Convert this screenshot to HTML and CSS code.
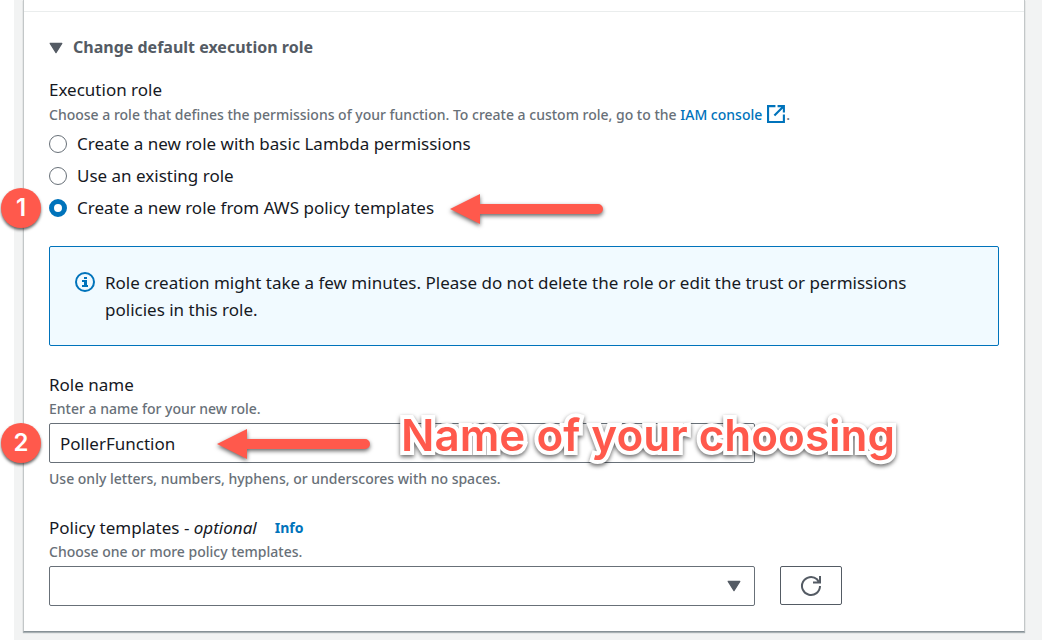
FILE: index.html
```html
<!DOCTYPE html>
<html lang="en">
<head>
<meta charset="utf-8">
<title>Create function</title>
<link rel="stylesheet" href="styles.css">
</head>
<body>
<main class="page">
  <form class="card">
    <div class="card-top"></div>
    <div class="card-body">
      <button type="button" class="expander">
        <svg class="caret" viewBox="0 0 12 10" aria-hidden="true"><path d="M1 1H11L6 9Z"/></svg>
        Change default execution role
      </button>

      <fieldset class="roles">
        <legend class="label">Execution role</legend>
        <p class="hint">Choose a role that defines the permissions of your function. To create a custom role, go to the <a href="#iam">IAM console<svg class="external" viewBox="0 0 18 18" aria-hidden="true"><path d="M8 2H1V17H16V10M10 2H16V8M16 2L7 11"/></svg></a>.</p>
        <div class="options">
          <label class="option"><input type="radio" name="role">Create a new role with basic Lambda permissions</label>
          <label class="option"><input type="radio" name="role">Use an existing role</label>
          <div class="marked">
            <label class="option"><input type="radio" name="role" checked>Create a new role from AWS policy templates</label>
            <span class="badge">1</span>
            <svg class="arrow arrow-role" viewBox="0 0 156 36" aria-hidden="true"><path d="M1 16L31 1V11H149A5 5 0 0 1 149 21H31V31Z"/></svg>
          </div>
        </div>
      </fieldset>

      <div class="alert" role="status">
        <svg class="info-icon" viewBox="0 0 20 20" aria-hidden="true"><circle cx="10" cy="10" r="9"/><path d="M9 5h3v2H9zM7 8h5v5h1v2H7v-2h2v-3H7z"/></svg>
        <p>Role creation might take a few minutes. Please do not delete the role or edit the trust or permissions policies in this role.</p>
      </div>

      <div class="field">
        <label class="label" for="role-name">Role name</label>
        <p class="hint">Enter a name for your new role.</p>
        <div class="marked">
          <input class="control" id="role-name" type="text" value="PollerFunction">
          <span class="badge">2</span>
          <svg class="arrow arrow-name" viewBox="0 0 156 36" aria-hidden="true"><path d="M1 16L31 1V11H149A5 5 0 0 1 149 21H31V31Z"/></svg>
          <span class="callout">Name of your choosing</span>
        </div>
        <p class="hint">Use only letters, numbers, hyphens, or underscores with no spaces.</p>
      </div>

      <div class="field">
        <div class="label-row"><label class="label" for="templates">Policy templates - <em>optional</em></label><a class="info" href="#info">Info</a></div>
        <p class="hint">Choose one or more policy templates.</p>
        <div class="select-row">
          <div class="select">
            <select class="control" id="templates"><option></option></select>
            <svg class="caret" viewBox="0 0 12 10" aria-hidden="true"><path d="M1 1H11L6 9Z"/></svg>
          </div>
          <button type="button" class="refresh" aria-label="Refresh">
            <svg viewBox="0 0 22 22" aria-hidden="true"><path d="M20 11A9 9 0 1 1 17 4.300L19 7M20 1V7.500H13"/></svg>
          </button>
        </div>
      </div>
    </div>
  </form>
</main>
</body>
</html>
```
FILE: styles.css
```css
* { box-sizing: border-box; }

body {
  margin: 0;
  background: #fff;
  color: #16191f;
  font: 17px/27px "Noto Sans", "Open Sans", sans-serif;
}

p { margin: 0; }
a { color: #0073bb; text-decoration: none; }

.page {
  margin-left: 14px;
  padding: 0 17px 9px 9px;
  background: #f2f3f3;
}

.card {
  background: #fff;
  border: 1px solid #c3c7c8;
  border-top: 0;
  border-bottom-color: #879196;
  box-shadow: 0 1px 1px #001c244d;
}

.card-top { height: 12px; border-bottom: 1px solid #eaeded; }
.card-body { padding: 22px 25px 25px; }

.expander {
  display: flex;
  align-items: center;
  gap: 10px;
  padding: 0;
  border: 0;
  background: none;
  color: #545b64;
  font: inherit;
  font-size: 16px;
  font-weight: 700;
}

.caret {
  width: 14px;
  height: 12px;
  fill: #545b64;
  stroke: #545b64;
  stroke-linejoin: round;
}

.roles { margin: 15px 0 25px; padding: 0; border: 0; }
.label { display: block; padding: 0; }
.hint { color: #687078; font-size: 14px; font-weight: 500; line-height: 22px; }
.roles .hint { padding-top: 1px; }

.external {
  width: 19px;
  height: 19px;
  margin-left: 5px;
  vertical-align: -3px;
  fill: none;
  stroke: #0073bb;
  stroke-width: 2;
}

.options { display: grid; gap: 5px; margin-top: 4px; }
.option { display: flex; align-items: center; gap: 10px; }

.option input {
  appearance: none;
  width: 18px;
  height: 18px;
  margin: 0;
  border: 1px solid #687078;
  border-radius: 50%;
  background: #fff;
}

.option input:checked { border: 5px solid #0073bb; }

.marked { position: relative; }

.badge {
  position: absolute;
  left: -48px;
  top: 50%;
  width: 40px;
  height: 40px;
  margin-top: -20px;
  border-radius: 50%;
  background: #ff594c;
  box-shadow: 0 2px 3px #0009;
  color: #fff;
  font: 600 24px/40px Inter, sans-serif;
  text-align: center;
}

.arrow {
  position: absolute;
  top: 50%;
  width: 156px;
  height: 36px;
  margin-top: -15px;
  fill: #ff594c;
  filter: drop-shadow(0 2px 2px #0009);
}

.arrow-role { left: 400px; }
.arrow-name { left: 167px; }

.callout {
  position: absolute;
  left: 352px;
  top: -16px;
  color: #ff594c;
  font: 600 44px/56px Inter, sans-serif;
  white-space: nowrap;
  -webkit-text-stroke: 8px #fff;
  paint-order: stroke fill;
  filter: drop-shadow(0 2px 2px #0009);
}

.alert {
  display: flex;
  gap: 10px;
  padding: 22px 25px;
  border: 1px solid #0073bb;
  border-radius: 2px;
  background: #f1faff;
}

.alert p { max-width: 820px; }

.info-icon { flex: none; width: 20px; height: 20px; margin-top: 3px; fill: #0073bb; }
.info-icon circle { fill: none; stroke: #0073bb; stroke-width: 2; }

.field { margin-top: 24px; }
.alert + .field { margin-top: 25px; }
.field .marked { margin: 3px 0 5px; }

.control {
  display: block;
  width: 74.300%;
  height: 40px;
  padding: 0 10px;
  border: 1px solid #687078;
  border-radius: 2px;
  background: #fff;
  color: #16191f;
  font: inherit;
}

.label-row { display: flex; align-items: center; gap: 18px; }
.info { font-size: 14px; font-weight: 700; }

.select-row { display: flex; align-items: flex-start; gap: 25px; margin-top: 3px; }
.select { display: grid; align-items: center; width: 74.300%; }
.select .control, .select .caret { grid-area: 1 / 1; }
.select .control { width: 100%; appearance: none; }
.select .caret { justify-self: end; margin-right: 14px; pointer-events: none; }

.refresh {
  display: grid;
  place-items: center;
  width: 62px;
  height: 39px;
  padding: 0;
  border: 1px solid #545b64;
  border-radius: 2px;
  background: #fff;
}

.refresh svg { width: 22px; height: 22px; fill: none; stroke: #545b64; stroke-width: 2; }
```
